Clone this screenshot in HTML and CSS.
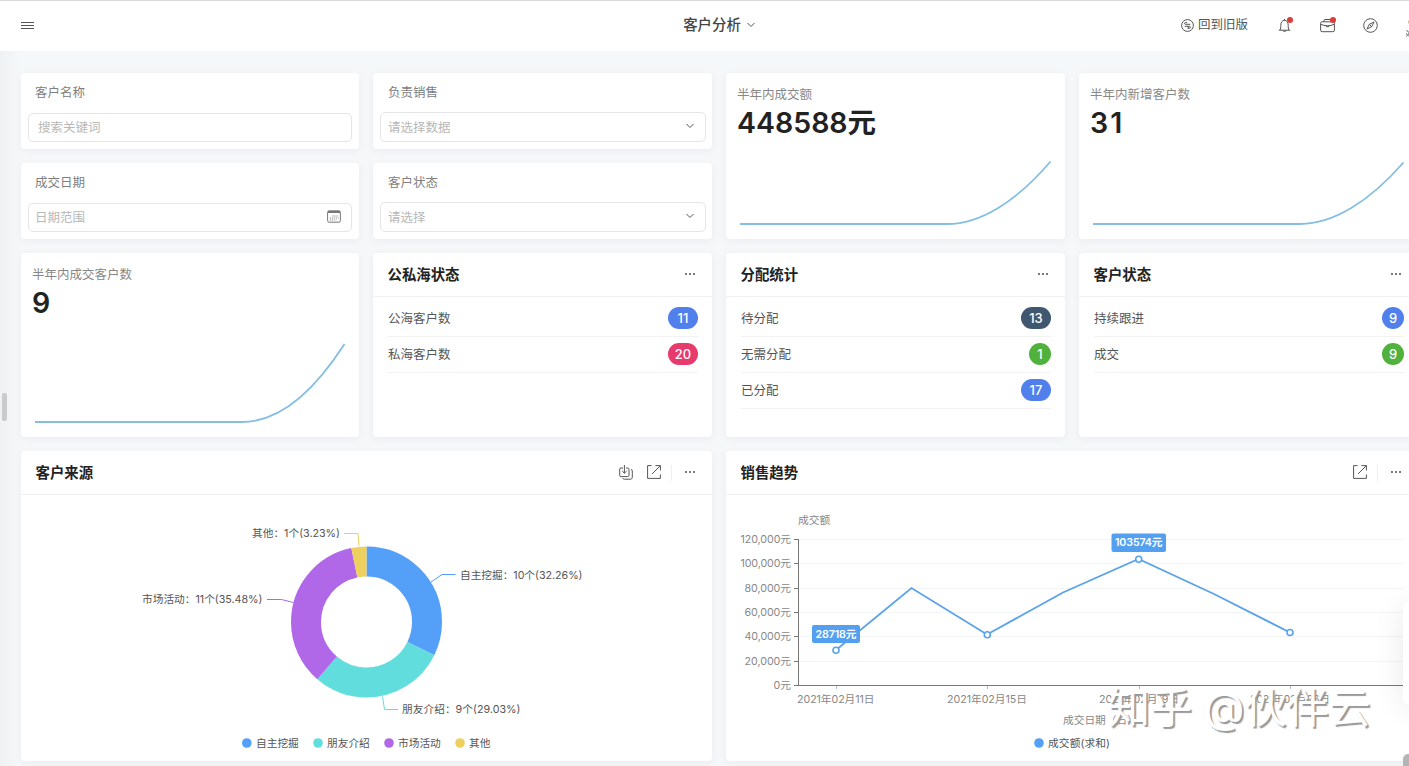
FILE: index.html
```html
<!DOCTYPE html>
<html lang="zh-CN">
<head>
    <meta charset="UTF-8">
    <meta name="viewport" content="width=device-width, initial-scale=1.0">
    <title>客户分析</title>
    <link rel="stylesheet" href="styles.css">
</head>
<body>
<div class="app">
    <header class="topbar">
        <div class="topbar-left">
            <svg class="menu-icon" width="13" height="9" viewBox="0 0 13 9">
                <path d="M0 1.500h13M0 4.500h13M0 7.500h13"></path>
            </svg>
        </div>
        <h1 class="topbar-title">客户分析
            <svg class="icon" width="8" height="6" viewBox="0 0 8 6"><path d="M.5 1L4 4.5 7.500 1"></path></svg>
        </h1>
        <nav class="topbar-right">
            <a class="old-version">
                <svg class="icon" width="13" height="13" viewBox="0 0 13 13">
                    <circle cx="6.500" cy="6.500" r="5.900"></circle>
                    <path d="M9.300 5.300H4.600c-1.500 0-1.500-1.700 0-1.700h1.600M3.700 7.300h4.700c1.500 0 1.500 2 0 2H6.500M6.500 7.400L8 9.300"></path>
                </svg>
                回到旧版
            </a>
            <span class="nav-item has-dot">
                <svg class="icon" width="15" height="15" viewBox="0 0 15 15">
                    <path d="M1.800 12.200h11.400M3 12c.7-1.200.8-2.500.8-4.700 0-2.900 1.300-5 3.700-5s3.700 2.100 3.700 5c0 2.200.1 3.500.8 4.700M7.500 1v1.300M5.900 12.400c.2 1.600 3 1.600 3.200 0"></path>
                </svg>
            </span>
            <span class="nav-item has-dot">
                <svg class="icon" width="15" height="15" viewBox="0 0 15 15">
                    <rect x=".6" y="3.800" width="13.800" height="9.900" rx="1.500"></rect>
                    <path d="M3.500 3.600L4.600 1.500h6l1.100 2.100M.8 6.300c4 2 9.400 2 13.400 0M6.300 7.700v1h2.400v-1"></path>
                </svg>
            </span>
            <span class="nav-item">
                <svg class="icon" width="15" height="15" viewBox="0 0 15 15">
                    <circle cx="7.500" cy="7.500" r="6.800"></circle>
                    <path d="M11 4L8.700 8.700 4 11l2.300-4.700zM6.300 6.300l2.400 2.400"></path>
                </svg>
            </span>
            <svg class="avatar" width="24" height="24" viewBox="0 0 24 24">
                <circle cx="4" cy="9" r="2" fill="#c8bd84"></circle>
                <path d="M.5 17.500l1.500 1M0 20.500l1.500 1M.3 23.500l1.700-2M3 18v5.500" stroke="#555"></path>
            </svg>
        </nav>
    </header>

    <main class="board">
        <section class="card filter">
            <label>客户名称</label>
            <div class="field field-search">搜索关键词</div>
        </section>
        <section class="card filter filter-select">
            <label>负责销售</label>
            <div class="field">请选择数据
                <svg class="icon" width="8" height="6" viewBox="0 0 8 6"><path d="M.5 1L4 4.500 7.500 1"></path></svg>
            </div>
        </section>
        <section class="card stat stat-tall">
            <p class="stat-label">半年内成交额</p>
            <p class="stat-value">448588元</p>
            <svg class="spark" width="312" height="66" viewBox="0 0 312 66">
                <path d="M0 64H207C240 64 276 42 310.500 1.500"></path>
            </svg>
        </section>
        <section class="card stat stat-tall">
            <p class="stat-label">半年内新增客户数</p>
            <p class="stat-value stat-wide">31</p>
            <svg class="spark" width="312" height="66" viewBox="0 0 312 66">
                <path d="M0 64H207C240 64 276 42 310.500 2.500"></path>
            </svg>
        </section>
        <section class="card filter">
            <label>成交日期</label>
            <div class="field">日期范围
                <svg class="icon calendar" width="14" height="13" viewBox="0 0 14 13">
                    <rect x=".6" y=".8" width="12.800" height="11.400" rx="1.500"></rect>
                    <path d="M1 2h12" stroke-width="2"></path>
                    <path d="M5.500 6h6M2.800 8h8.700M2.800 10h6.500" stroke-dasharray="1 1"></path>
                </svg>
            </div>
        </section>
        <section class="card filter filter-select">
            <label>客户状态</label>
            <div class="field">请选择
                <svg class="icon" width="8" height="6" viewBox="0 0 8 6"><path d="M.5 1L4 4.500 7.500 1"></path></svg>
            </div>
        </section>

        <section class="card stat">
            <p class="stat-label">半年内成交客户数</p>
            <p class="stat-value">9</p>
            <svg class="spark" width="312" height="82" viewBox="0 0 312 82">
                <path d="M0 80H207C242 80 276 54 309.500 2"></path>
            </svg>
        </section>
        <section class="card">
            <div class="card-head">
                <h2>公私海状态</h2>
                <span class="more"></span>
            </div>
            <ul class="count-list">
                <li>公海客户数 <b class="badge wide blue">11</b></li>
                <li>私海客户数 <b class="badge wide red">20</b></li>
            </ul>
        </section>
        <section class="card">
            <div class="card-head">
                <h2>分配统计</h2>
                <span class="more"></span>
            </div>
            <ul class="count-list">
                <li>待分配 <b class="badge wide navy">13</b></li>
                <li>无需分配 <b class="badge green">1</b></li>
                <li>已分配 <b class="badge wide blue">17</b></li>
            </ul>
        </section>
        <section class="card">
            <div class="card-head">
                <h2>客户状态</h2>
                <span class="more"></span>
            </div>
            <ul class="count-list">
                <li>持续跟进 <b class="badge blue">9</b></li>
                <li>成交 <b class="badge green">9</b></li>
            </ul>
        </section>

        <section class="card chart-card">
            <div class="card-head">
                <h2>客户来源</h2>
                <div class="tools">
                    <svg class="icon" width="14" height="15" viewBox="0 0 14 15">
                        <path d="M4 3H2a1.300 1.300 0 0 0-1.300 1.300v6A1.300 1.300 0 0 0 2 11.600h6.700a1.300 1.300 0 0 0 1.300-1.300v-6A1.300 1.300 0 0 0 8.700 3H7M5.400 0v8M3.200 6l2.200 2.200L7.600 6M12 4.500c.9 0 1.300.6 1.300 1.300v6.400c0 1.300-.7 2-2 2H5.500c-1 0-1.700-.4-1.700-1.200"></path>
                    </svg>
                    <svg class="icon" width="14" height="14" viewBox="0 0 14 14">
                        <path d="M4.500.6H.6v12.800h12.800V9.500M8.500.6h4.900v4.900M13.200.8L5 9"></path>
                    </svg>
                    <i class="divider"></i>
                    <span class="more"></span>
                </div>
            </div>
            <svg class="chart" width="691" height="266" viewBox="21 495 691 266">
                <g class="ring" transform="rotate(-90 366.500 622)">
                    <circle cx="366.500" cy="622" r="60.500" pathLength="31" stroke="#54a0f8" stroke-dasharray="10 21"></circle>
                    <circle cx="366.500" cy="622" r="60.500" pathLength="31" stroke="#61dddd" stroke-dasharray="9 22" stroke-dashoffset="-10"></circle>
                    <circle cx="366.500" cy="622" r="60.500" pathLength="31" stroke="#b168e8" stroke-dasharray="11 20" stroke-dashoffset="-19"></circle>
                    <circle cx="366.500" cy="622" r="60.500" pathLength="31" stroke="#eed05e" stroke-dasharray="1 30" stroke-dashoffset="-30"></circle>
                </g>
                <g class="leader">
                    <path d="M431 582L442 574.500H455.500" stroke="#54a0f8"></path>
                    <path d="M382.500 696.500L384.500 709.500H398" stroke="#61dddd"></path>
                    <path d="M293.500 602.500L281.500 599.500H267" stroke="#b168e8"></path>
                    <path d="M359 546L358 533.500H344" stroke="#eed05e"></path>
                </g>
                <g class="pie-label">
                    <text x="252" y="537" textLength="88">其他：1个(3.23%)</text>
                    <text x="460" y="578.500" textLength="122.500">自主挖掘：10个(32.26%)</text>
                    <text x="142" y="603" textLength="120.500">市场活动：11个(35.48%)</text>
                    <text x="402" y="713" textLength="118.500">朋友介绍：9个(29.03%)</text>
                </g>
                <g class="legend">
                    <circle cx="246.800" cy="743" r="4.800" fill="#54a0f8"></circle>
                    <text x="256" y="747">自主挖掘</text>
                    <circle cx="318" cy="743" r="4.800" fill="#61dddd"></circle>
                    <text x="327" y="747">朋友介绍</text>
                    <circle cx="389" cy="743" r="4.800" fill="#b168e8"></circle>
                    <text x="398" y="747">市场活动</text>
                    <circle cx="460" cy="743" r="4.800" fill="#eed05e"></circle>
                    <text x="469" y="747">其他</text>
                </g>
            </svg>
        </section>

        <section class="card chart-card">
            <div class="card-head">
                <h2>销售趋势</h2>
                <div class="tools">
                    <svg class="icon" width="14" height="14" viewBox="0 0 14 14">
                        <path d="M4.500.6H.6v12.800h12.800V9.500M8.500.6h4.900v4.900M13.200.8L5 9"></path>
                    </svg>
                    <i class="divider"></i>
                    <span class="more"></span>
                </div>
            </div>
            <svg class="chart" width="691" height="266" viewBox="726 495 691 266">
                <path class="grid-line" d="M799 539.500H1404M799 563.500H1404M799 588.500H1404M799 612.500H1404M799 636.500H1404M799 661.500H1404"></path>
                <path class="axis" d="M798.500 539V686M794 539.500h5M794 563.500h5M794 588.500h5M794 612.500h5M794 636.500h5M794 661.500h5M794 685.500H1404"></path>
                <path class="tick" d="M836.500 686v3M987.500 686v3M1139.500 686v3M1290.500 686v3"></path>
                <g class="axis-label">
                    <text x="798" y="524">成交额</text>
                    <text x="740.500" y="543" textLength="50.500">120,000元</text>
                    <text x="740.500" y="567" textLength="50.500">100,000元</text>
                    <text x="744.500" y="591.500" textLength="46.500">80,000元</text>
                    <text x="744.500" y="616" textLength="46.500">60,000元</text>
                    <text x="744.500" y="640" textLength="46.500">40,000元</text>
                    <text x="744.500" y="664.500" textLength="46.500">20,000元</text>
                    <text x="773.500" y="689" textLength="17.500">0元</text>
                    <text x="797" y="703" textLength="77.500">2021年02月11日</text>
                    <text x="947" y="703" textLength="80">2021年02月15日</text>
                    <text x="1099" y="703" textLength="80">2021年02月19日</text>
                    <text x="1250" y="703" textLength="80">2021年02月23日</text>
                    <text x="1063" y="724">成交日期（日）</text>
                </g>
                <polyline class="trend" points="836,650 911.500,588 987,634.500 1063,592.500 1138.500,559 1214,594 1290,632.500"></polyline>
                <g class="point">
                    <circle cx="836" cy="650.300" r="3"></circle>
                    <circle cx="987.300" cy="634.700" r="3"></circle>
                    <circle cx="1138.700" cy="559.200" r="3"></circle>
                    <circle cx="1290" cy="632.500" r="3"></circle>
                </g>
                <g class="tip">
                    <rect x="812" y="625" width="48" height="18" rx="2"></rect>
                    <text x="815.500" y="637.500" textLength="41">28718元</text>
                    <rect x="1111.500" y="533.500" width="54.500" height="18.500" rx="2"></rect>
                    <text x="1115" y="546" textLength="47.500">103574元</text>
                </g>
                <g class="legend">
                    <circle cx="1039" cy="743" r="4.800" fill="#54a0f8"></circle>
                    <text x="1048" y="747" textLength="62">成交额(求和)</text>
                </g>
            </svg>
        </section>
    </main>

    <i class="side-handle"></i>
    <div class="float-panel"></div>
    <i class="float-corner"></i>
    <div class="watermark">知乎 @伙伴云</div>
</div>
</body>
</html>
```

FILE: styles.css
```css
* {
    box-sizing: border-box;
}

html,
body {
    margin: 0;
    height: 100%;
    overflow: hidden;
}

body {
    position: relative;
    font-family: Inter, "Noto Sans CJK SC", sans-serif;
    font-size: 12.5px;
    color: #555;
    background-color: #f6f7f9;
}

h1, h2, p, ul {
    margin: 0;
    padding: 0;
}

.app {
    width: 1439px;
    height: 766px;
    background: linear-gradient(90deg, #f0f1f3 0, #f6f7f9 20px);
}

.icon {
    fill: none;
    stroke: #555;
    stroke-width: 1;
    flex: none;
}

/* top bar */
.topbar {
    height: 51px;
    padding: 0 9px 2px 21px;
    display: grid;
    grid-template-columns: 1fr auto 1fr;
    align-items: center;
    background-color: #fff;
    border-top: 1px solid #d8d8d8;
}

.topbar-left {
    display: flex;
}

.menu-icon {
    stroke: #555;
    stroke-width: 1;
}

.topbar-title {
    display: flex;
    align-items: center;
    gap: 6px;
    padding-left: 12px;
    margin-right: 25px;
    font-size: 14.4px;
    font-weight: 500;
    line-height: 20px;
    color: #444;
}

.topbar-right {
    display: flex;
    align-items: center;
    justify-content: flex-end;
    gap: 28px;
}

.old-version {
    display: flex;
    align-items: center;
    gap: 4px;
    margin-right: 1px;
    line-height: 18px;
}

.nav-item {
    position: relative;
    display: flex;
}

.has-dot::after {
    content: "";
    position: absolute;
    top: -1px;
    right: -1px;
    width: 6px;
    height: 6px;
    border-radius: 50%;
    background-color: #dc3d38;
}

.avatar {
    fill: none;
}

/* board */
.board {
    display: grid;
    grid-template-columns: 338px repeat(3, 339px);
    grid-template-rows: 76px 76px 184px 310px;
    gap: 14px;
    padding: 22px 21px;
}

.card {
    min-width: 0;
    background-color: #fff;
    border-radius: 4px;
    box-shadow: 0 2px 8px rgba(30, 40, 60, 0.05);
}

.filter {
    display: flex;
    flex-direction: column;
    gap: 11px;
    padding: 10px 7px 7px;
}

.filter label {
    padding-left: 7px;
    line-height: 19px;
    color: #808080;
}

.field {
    height: 29px;
    padding: 0 10px 2px 6px;
    display: flex;
    align-items: center;
    justify-content: space-between;
    border: 1px solid #e4e5e7;
    border-radius: 5px;
    color: #b8b8b8;
}

.field-search {
    padding-left: 9px;
}

.filter-select {
    gap: 10px;
    padding-right: 6px;
}

.filter-select label {
    padding-left: 8px;
}

.filter-select .field {
    height: 30px;
    padding-left: 7px;
    padding-right: 11px;
}

.filter .calendar {
    stroke: #777;
}

.stat {
    display: flex;
    flex-direction: column;
    padding: 12px 11px 13px;
}

.stat-tall {
    grid-row: span 2;
}

.stat-label {
    line-height: 19px;
    color: #888;
}

.stat-value {
    font-size: 28.500px;
    font-weight: 600;
    line-height: 38px;
    color: #222;
}

.stat-wide {
    letter-spacing: 2px;
}

.spark {
    margin-top: auto;
    margin-left: 3px;
    fill: none;
    stroke: #84bfe3;
    stroke-width: 1.8;
}

.card-head {
    display: flex;
    align-items: center;
    justify-content: space-between;
    height: 44px;
    padding: 0 16px 0 14.500px;
    border-bottom: 1px solid #f0f1f3;
}

.card-head h2 {
    font-size: 14.400px;
    font-weight: 600;
    line-height: 20px;
    color: #222;
}

.more {
    width: 12px;
    height: 2px;
    margin-bottom: 2px;
    background: radial-gradient(circle, #777 0.7px, transparent 1.1px) 0 0 / 4px 2px;
}

.tools {
    display: flex;
    align-items: center;
    gap: 14px;
}

.tools .icon {
    margin-bottom: 1px;
}

.divider {
    width: 1px;
    height: 16px;
    margin: 0 -2px 0 -4px;
    background-color: #eee;
}

.count-list {
    padding: 4px 14px 0 15px;
    list-style: none;
}

.count-list li {
    display: flex;
    align-items: center;
    justify-content: space-between;
    height: 36px;
    padding-bottom: 2px;
    border-bottom: 1px solid #f2f2f3;
}

.badge {
    min-width: 22px;
    border-radius: 11px;
    font-size: 13px;
    font-weight: 500;
    line-height: 22px;
    text-align: center;
    color: #fff;
}

.badge.wide {
    min-width: 30px;
}

.blue { background-color: #5180ed; }
.red { background-color: #e83b6d; }
.navy { background-color: #3f5870; }
.green { background-color: #50b13c; }

/* charts */
.chart-card {
    grid-column: span 2;
}

.chart {
    display: block;
    font-size: 10.700px;
}

.ring {
    fill: none;
    stroke-width: 30;
}

.leader {
    fill: none;
    stroke-width: 1;
}

.pie-label,
.legend {
    fill: #555;
}

.grid-line {
    stroke: #f3f4f5;
}

.axis {
    fill: none;
    stroke: #777;
}

.tick {
    stroke: #bbb;
}

.axis-label {
    fill: #888;
}

.trend {
    fill: none;
    stroke: #5ba3e9;
    stroke-width: 1.800;
}

.point {
    fill: #fff;
    stroke: #5aa2ec;
    stroke-width: 1.600;
}

.tip rect {
    fill: #54a0f0;
}

.tip text {
    fill: #fff;
    font-weight: 600;
}

/* overlays */
.side-handle {
    position: absolute;
    left: 2px;
    top: 393px;
    width: 5px;
    height: 28px;
    border-radius: 2px;
    background-color: #c9cacc;
}

.float-panel {
    position: absolute;
    left: 1403px;
    top: 601px;
    width: 40px;
    height: 103px;
    border-radius: 5px;
    background-color: #fff;
    box-shadow: 0 4px 32px rgba(0, 0, 0, 0.09);
}

.float-corner {
    position: absolute;
    left: 1403px;
    top: 754px;
    width: 24px;
    height: 24px;
    border-radius: 5px;
    background-color: #b5b5b5;
}

.watermark {
    position: absolute;
    left: 1108px;
    top: 680px;
    font-size: 42px;
    line-height: 56px;
    white-space: nowrap;
    color: #fff;
    text-shadow: 2px 2px 1px #999;
}
```
